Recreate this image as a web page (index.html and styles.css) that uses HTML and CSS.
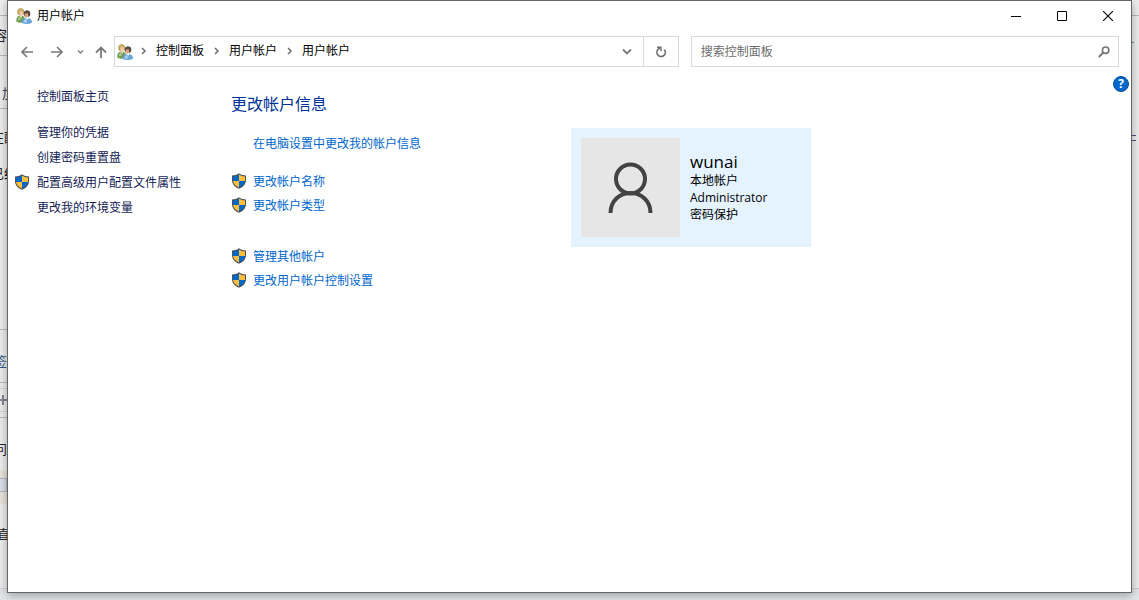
FILE: index.html
```html
<!DOCTYPE html>
<html lang="zh-CN">
<head>
<meta charset="utf-8">
<title>用户帐户</title>
<link rel="stylesheet" href="styles.css">
</head>
<body>
<svg class="defs" aria-hidden="true">
  <symbol id="shield" viewBox="0 0 16 16">
    <path d="M8 .3C6 1.800 3.500 2.500 1 2.600V7c0 4 2.500 6.800 7 8.800 4.500-2 7-4.800 7-8.800V2.600C12.500 2.500 10 1.800 8 .3z" fill="#4b5257"/>
    <path d="M8 1.500C6.300 2.700 4.300 3.400 2 3.600V8h6z" fill="#0068c9"/>
    <path d="M8 1.500c1.700 1.200 3.700 1.900 6 2.100V8H8z" fill="#ffbe3c"/>
    <path d="M2 8h6v6.600C4.500 13 2.400 11 2 8z" fill="#ffbe3c"/>
    <path d="M14 8H8v6.600c3.500-1.600 5.600-3.600 6-6.600z" fill="#0068c9"/>
  </symbol>
  <symbol id="users" viewBox="0 0 16 16">
    <path d="M.3 13.500C.2 9.500 1.500 7.500 4.600 7.400c2.800 0 4.200 1.600 4.400 4l-.5 2.800c-3 .8-6 .6-8.200-.7z" fill="#6f9a55"/>
    <path d="M1.500 12.500c.2-2.400 1-3.800 2.500-4.300l.8 3.500z" fill="#a5c68b"/>
    <path d="M3.800 7.500h2.400l-1 3z" fill="#f4e3c8"/>
    <circle cx="4.700" cy="3.700" r="3.500" fill="#b39a52"/>
    <ellipse cx="5.300" cy="4.900" rx="2.100" ry="2.700" fill="#f0c9a0"/>
    <path d="M1.800 3.900C2 1.200 3.600.3 5 .5c1.600.2 2.600 1.300 2.700 2.900C6 3.300 4.800 2.800 4 2.200 3.600 3.400 3 4.300 2.300 5z" fill="#c6ae68"/>
    <path d="M5.800 15c-.2-3 1.800-5.100 5.300-5.100 3.300 0 5.200 2.100 4.900 4.800-2.700 1.500-7.500 1.600-10.200.3z" fill="#6ba5da"/>
    <path d="M7.500 14.500c.2-2 1.200-3.300 2.600-3.700l1.200 3.700z" fill="#a9d1f3"/>
    <path d="M9.800 10h2.500l-1 2z" fill="#f5f8fb"/>
    <circle cx="11" cy="5.700" r="3.300" fill="#55453c"/>
    <ellipse cx="10.400" cy="7.100" rx="1.900" ry="2.700" fill="#d9a27c"/>
    <path d="M8 5.700c.1-2 1.400-3.300 3-3.300 2 0 3.300 1.400 3.200 3.400l-.8 2c-.5-1-.8-1.700-1.200-2.500-1.500.3-3 .2-4.200.4z" fill="#5b4b42"/>
  </symbol>
  <symbol id="crumb" viewBox="0 0 7 10">
    <path d="M2 2l3 3-3 3" fill="none" stroke="#6e6e6e" stroke-width="1.500"/>
  </symbol>
</svg>

<div class="backdrop" aria-hidden="true">
  <i class="rule" style="top:15px"></i>
  <span class="scrap" style="top:26px">容</span>
  <i class="rule" style="top:55px"></i>
  <span class="scrap start" style="top:84px">加</span>
  <i class="rule" style="top:108px"></i>
  <span class="scrap pair" style="top:128px">在配</span>
  <span class="scrap pair" style="top:164px">已经</span>
  <i class="rule" style="top:329px"></i>
  <span class="scrap sign" style="top:352px">签</span>
  <i class="rule" style="top:382px"></i>
  <i class="rule light" style="top:388px"></i>
  <i class="plus" style="top:399px"></i>
  <i class="rule light" style="top:411px"></i>
  <i class="rule" style="top:417px"></i>
  <span class="scrap" style="top:440px">问</span>
  <div class="band"><i class="field"></i></div>
  <span class="scrap mid" style="top:525px">直</span>
  <i class="rule right" style="top:15px"></i>
  <i class="dash blue" style="top:42px"></i>
  <i class="dash" style="top:135px"></i>
  <i class="dash" style="top:140px"></i>
  <div class="footing"></div>
</div>

<div class="window">
  <header class="titlebar">
    <svg class="icon"><use href="#users"/></svg>
    <h1 class="title">用户帐户</h1>
    <div class="caption">
      <button type="button" aria-label="最小化"><svg width="10" height="10"><path d="M0 5.500h10" stroke="#000"/></svg></button>
      <button type="button" aria-label="最大化"><svg width="10" height="10"><path d="M.5.500h9v9h-9z" fill="none" stroke="#000"/></svg></button>
      <button type="button" aria-label="关闭"><svg width="10" height="10"><path d="M0 0l10 10M10 0L0 10" stroke="#000" stroke-width="1.100"/></svg></button>
    </div>
  </header>

  <div class="toolbar">
    <button class="nav" type="button" aria-label="后退"><svg width="12" height="12"><path d="M12 6H1.500M6 1L1 6l5 5" fill="none" stroke="#7a7a7a" stroke-width="1.600"/></svg></button>
    <button class="nav" type="button" aria-label="前进"><svg width="12" height="12"><path d="M0 6h10.500M6 1l5 5-5 5" fill="none" stroke="#7a7a7a" stroke-width="1.600"/></svg></button>
    <button class="nav recent" type="button" aria-label="最近位置"><svg width="7" height="6"><path d="M1 1.500l2.500 2.500L6 1.500" fill="none" stroke="#7a7a7a" stroke-width="1.300"/></svg></button>
    <button class="nav up" type="button" aria-label="上移"><svg width="12" height="12"><path d="M6 12V1.500M1 6.500l5-5 5 5" fill="none" stroke="#7a7a7a" stroke-width="1.800"/></svg></button>
    <div class="address">
      <svg class="icon"><use href="#users"/></svg>
      <nav class="crumbs" aria-label="路径">
        <svg class="sep"><use href="#crumb"/></svg><a href="#">控制面板</a>
        <svg class="sep"><use href="#crumb"/></svg><a href="#">用户帐户</a>
        <svg class="sep"><use href="#crumb"/></svg><a href="#">用户帐户</a>
      </nav>
      <button class="drop" type="button" aria-label="以前的位置"><svg width="10" height="7"><path d="M1 1.500l4 4 4-4" fill="none" stroke="#7a7a7a" stroke-width="1.800"/></svg></button>
      <button class="refresh" type="button" aria-label="刷新"><svg width="12" height="12"><path d="M9.300 3.600A4.200 4.200 0 1 1 3.300 3.200L5 1.800" fill="none" stroke="#747474" stroke-width="1.700"/><path d="M2 1.300h4v4" fill="none" stroke="#747474" stroke-width="1.400"/></svg></button>
    </div>
    <form class="search">
      <input type="text" aria-label="搜索控制面板" placeholder="搜索控制面板">
      <button type="button" aria-label="搜索"><svg width="12" height="12"><circle cx="7.600" cy="4.200" r="3.200" fill="none" stroke="#747474" stroke-width="1.600"/><path d="M5.300 6.500L.8 11" stroke="#747474" stroke-width="1.800"/></svg></button>
    </form>
  </div>

  <div class="body">
    <aside class="side">
      <a class="home" href="#">控制面板主页</a>
      <a href="#">管理你的凭据</a>
      <a href="#">创建密码重置盘</a>
      <a class="guarded" href="#"><svg class="icon"><use href="#shield"/></svg>配置高级用户配置文件属性</a>
      <a href="#">更改我的环境变量</a>
    </aside>

    <main class="main">
      <div class="tasks">
        <h2>更改帐户信息</h2>
        <a class="lead" href="#">在电脑设置中更改我的帐户信息</a>
        <div class="group">
          <a href="#"><svg class="icon"><use href="#shield"/></svg>更改帐户名称</a>
          <a href="#"><svg class="icon"><use href="#shield"/></svg>更改帐户类型</a>
        </div>
        <div class="group">
          <a href="#"><svg class="icon"><use href="#shield"/></svg>管理其他帐户</a>
          <a href="#"><svg class="icon"><use href="#shield"/></svg>更改用户帐户控制设置</a>
        </div>
      </div>
      <section class="card">
        <div class="avatar">
          <svg width="45" height="51" viewBox="0 0 45 51"><g fill="none" stroke="#434343" stroke-width="4"><circle cx="22.500" cy="17" r="14.500"/><path d="M2.500 51C2.500 39 11.500 31 22.500 31s20 8 20 20"/></g></svg>
        </div>
        <div class="who">
          <strong>wunai</strong>
          <span>本地帐户</span>
          <span>Administrator</span>
          <span>密码保护</span>
        </div>
      </section>
    </main>
    <button class="help" type="button" aria-label="帮助">?</button>
  </div>
</div>
</body>
</html>
```
FILE: styles.css
```css
* { box-sizing: border-box; }

body {
  margin: 0;
  min-height: 100vh;
  display: flex;
  padding: 0 7px 7px;
  background: #f0f0f0;
  font: 12px/17px "Open Sans", "Noto Sans CJK SC", sans-serif;
  color: #000;
}

a { color: inherit; text-decoration: none; }
button { margin: 0; padding: 0; border: 0; background: none; font: inherit; display: flex; align-items: center; justify-content: center; }
svg { display: block; flex: none; }
.defs { position: absolute; width: 0; height: 0; }
.icon { width: 16px; height: 16px; }

/* Page visible around the edges of the window */
.backdrop { position: absolute; inset: 0; overflow: hidden; }
.backdrop > * { position: absolute; }
.rule { left: 0; width: 7px; height: 1px; background: #b9bac4; }
.rule.light { background: #d5d6dc; }
.rule.right { left: auto; right: 0; }
.scrap { left: -6px; font-size: 13px; line-height: 19px; white-space: nowrap; color: #222; }
.scrap.start { left: 2px; color: #445; }
.scrap.sign { color: #2d5a86; }
.scrap.mid { left: -3px; }
.scrap.pair { left: -9px; }
.plus { left: 0; width: 7px; height: 2px; background: #85859a; }
.plus::after { content: ""; position: absolute; left: 2px; top: -4px; width: 2px; height: 10px; background: #85859a; }
.band { left: 0; top: 470px; width: 7px; height: 34px; padding-top: 8px; background: #ebe6dd; }
.field { display: block; height: 14px; border: 1px solid #b9bcc8; border-left: 0; background: #dde2eb; }
.dash { right: 3px; width: 4px; height: 1px; background: #4b5478; }
.dash.blue { right: 5px; width: 2px; background: #5594b4; }
.footing { left: 0; right: 0; bottom: 0; height: 12px; border-top: 1px solid #cfd0d6; background: #e4e6ea; }

.window {
  position: relative;
  flex: 1;
  min-width: 0;
  border: 1px solid #666;
  background: #fff;
  box-shadow: 0 2px 10px rgba(0, 0, 0, .35);
}

.titlebar { display: flex; align-items: center; height: 29px; padding-left: 8px; gap: 5px; }
.title { margin: 0; font-size: 12px; font-weight: 400; }
.caption { display: flex; align-self: stretch; margin-left: auto; }
.caption button { width: 46px; }

.toolbar { display: flex; align-items: stretch; height: 31px; margin-top: 6px; padding: 0 12px 0 4px; }
.nav { width: 30px; }
.nav.recent { width: 17px; }
.nav.up { width: 24px; }

.address { display: flex; align-items: center; flex: 562 1 0; min-width: 0; margin: 0 12px 0 1px; padding-left: 2px; border: 1px solid #d9d9d9; }
.crumbs { display: flex; align-items: center; flex: 1; gap: 9px; padding: 0 0 2px 7px; white-space: nowrap; }
.sep { width: 7px; height: 10px; }
.drop { align-self: stretch; width: 32px; }
.refresh { align-self: stretch; width: 35px; border-left: 1px solid #d9d9d9; }

.search { display: flex; flex: 427 1 0; min-width: 0; border: 1px solid #d9d9d9; }
.search input { flex: 1; min-width: 0; padding: 0 0 0 9px; border: 0; outline: 0; background: none; font: inherit; }
.search input::placeholder { color: #6d6d6d; opacity: 1; }
.search button { width: 28px; }

.body { position: relative; display: flex; }
.side { display: flex; flex-direction: column; flex: none; width: 223px; padding: 21px 0 0 29px; gap: 8px; color: #151c55; }
.side .home { margin-bottom: 11px; }
.guarded, .group a { display: flex; align-items: flex-start; }
.guarded { gap: 7px; margin-left: -23px; }

.main { display: flex; flex: 1; min-width: 0; padding-top: 25px; }
.tasks { display: flex; flex-direction: column; flex: none; width: 340px; color: #0066cc; }
.tasks h2 { margin: 0; font-size: 16px; line-height: 24px; font-weight: 400; color: #003399; }
.lead { margin: 19px 0 4px 22px; }
.group { display: flex; flex-direction: column; gap: 7px; padding-top: 17px; margin-bottom: 17px; }
.group a { gap: 6px; }

.card { display: flex; align-items: center; align-self: flex-start; flex: none; width: 240px; margin-top: 36px; padding: 10px; gap: 10px; background: #e5f3ff; }
.avatar { display: flex; align-items: center; justify-content: center; width: 99px; height: 99px; background: #e6e6e6; }
.who { display: flex; flex-direction: column; }
.who strong { font-size: 17px; line-height: 20px; font-weight: 400; }

.help { position: absolute; top: 9px; right: 2px; width: 16px; height: 16px; border: 1px solid #0a4f91; border-radius: 50%; background: #0068cc; color: #fff; font-size: 12px; font-weight: 700; line-height: 14px; }
```
